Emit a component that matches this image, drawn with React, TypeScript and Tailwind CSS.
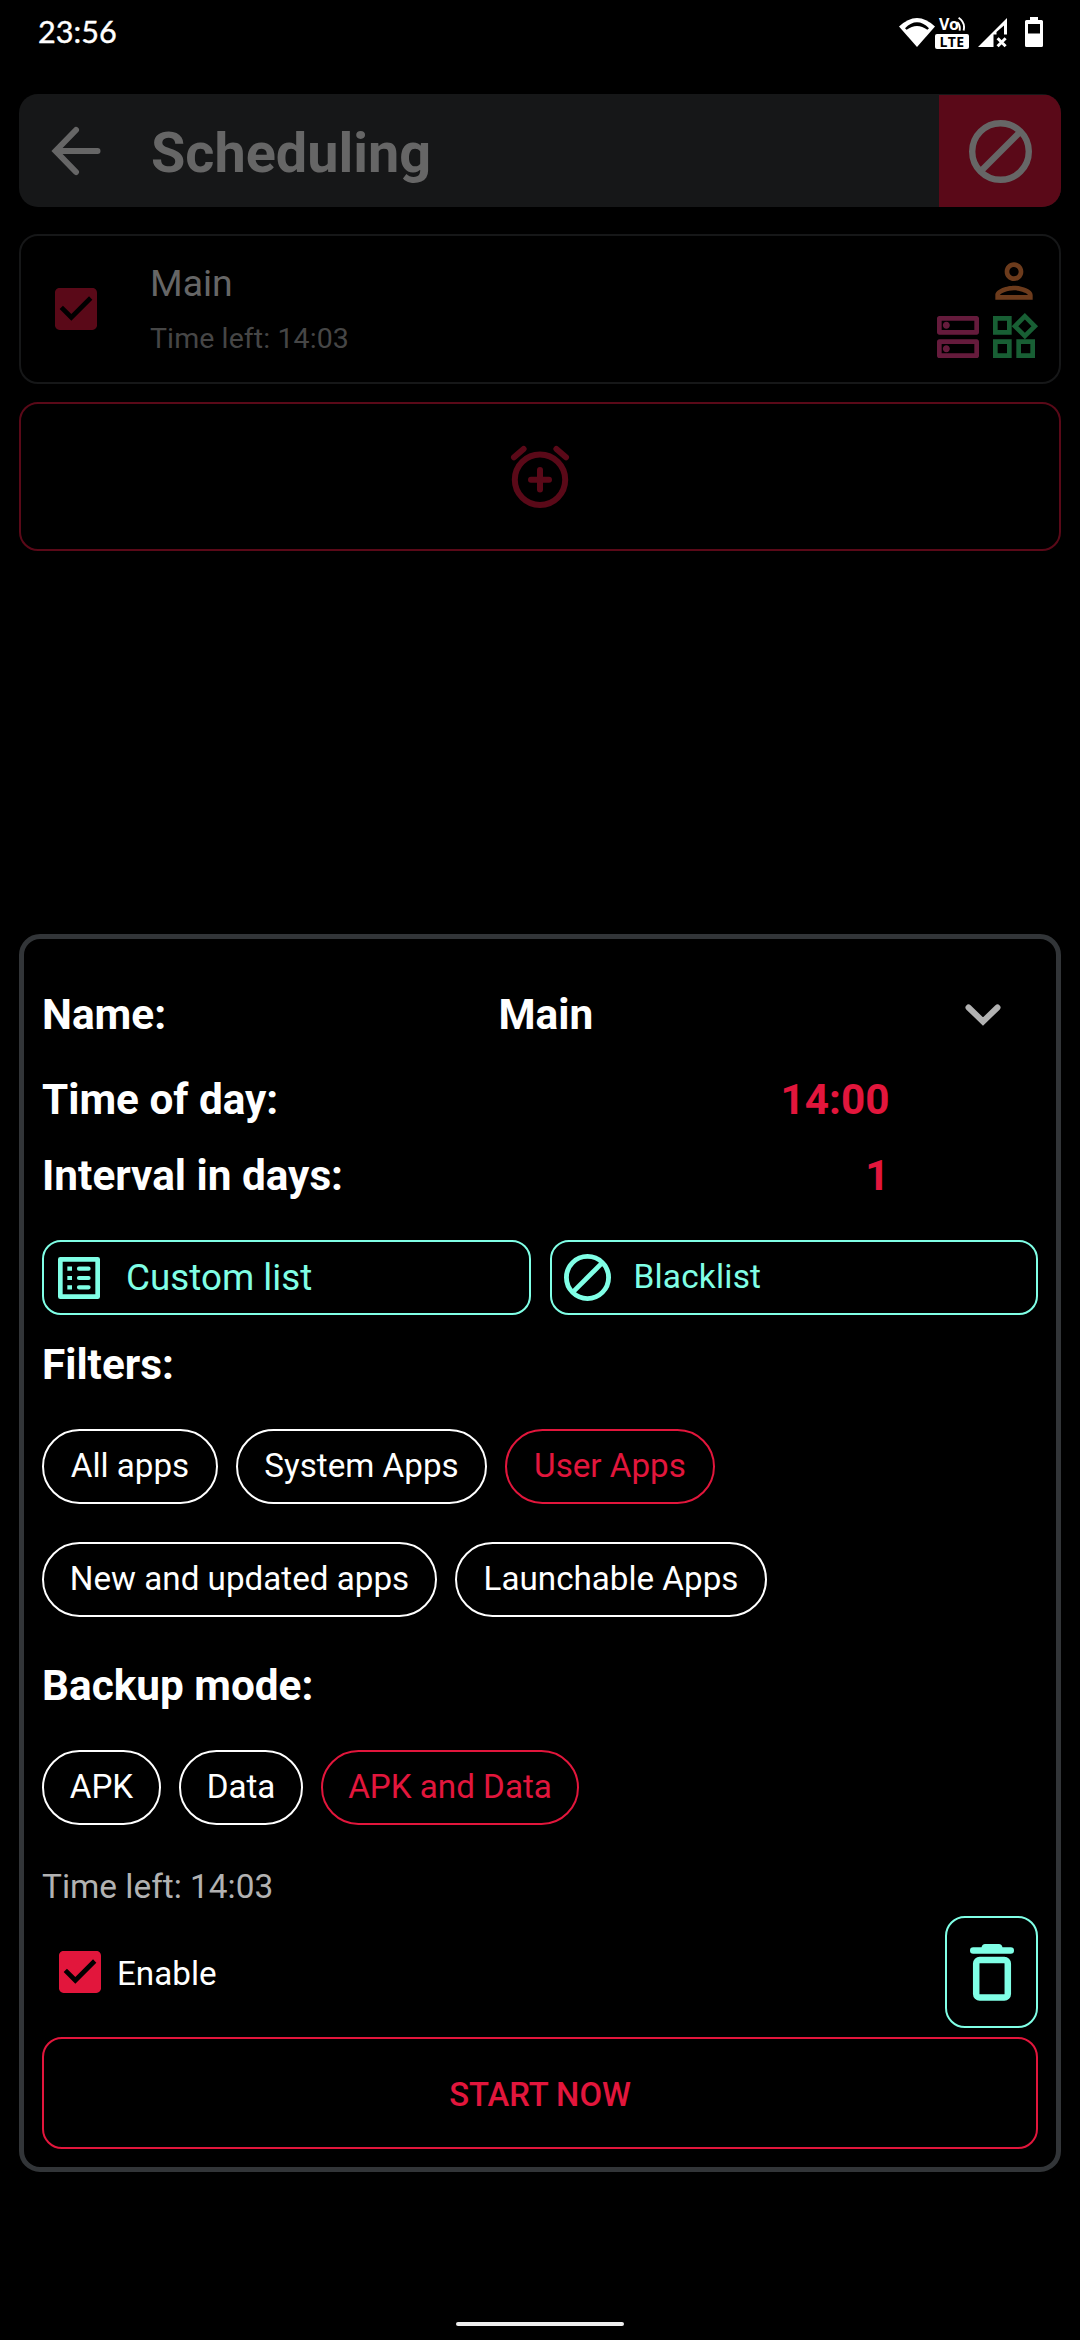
import type { ReactNode } from "react";

const CHECK_BOX =
  "M19 3H5c-1.11 0-2 .9-2 2v14c0 1.1.89 2 2 2h14c1.11 0 2-.9 2-2V5c0-1.1-.89-2-2-2zm-9 14l-5-5 1.41-1.41L10 14.17l7.59-7.59L19 8l-9 9z";
const PERSON =
  "M12 6c1.1 0 2 .9 2 2s-.9 2-2 2-2-.9-2-2 .9-2 2-2m0-2C9.79 4 8 5.79 8 8s1.79 4 4 4 4-1.79 4-4-1.79-4-4-4zm0 10c-2.67 0-8 1.34-8 4v2h16v-2c0-2.66-5.33-4-8-4zm-6 4c.22-.72 3.31-2 6-2 2.7 0 5.8 1.29 6 2H6z";
const DNS =
  "M19 15v4H5v-4h14m1-2H4c-.55 0-1 .45-1 1v6c0 .55.45 1 1 1h16c.55 0 1-.45 1-1v-6c0-.55-.45-1-1-1zM7 18.5c-.82 0-1.5-.67-1.5-1.5s.68-1.5 1.5-1.5 1.5.67 1.5 1.5-.67 1.5-1.5 1.5zM19 5v4H5V5h14m1-2H4c-.55 0-1 .45-1 1v6c0 .55.45 1 1 1h16c.55 0 1-.45 1-1V4c0-.55-.45-1-1-1zM7 8.5c-.82 0-1.5-.67-1.5-1.5S6.18 5.5 7 5.5s1.5.68 1.5 1.5S7.83 8.5 7 8.5z";
const WIDGETS =
  "M16.66 4.52l2.83 2.83-2.83 2.83-2.83-2.83 2.83-2.83M9 5v4H5V5h4m10 10v4h-4v-4h4M9 15v4H5v-4h4m7.66-13.31L11 7.34 16.66 13l5.66-5.66-5.66-5.65zM11 3H3v8h8V3zm10 10h-8v8h8v-8zm-10 0H3v8h8v-8z";

function MaterialIcon({ d, className }: { d: string; className: string }) {
  return (
    <svg viewBox="0 0 24 24" fill="currentColor" className={`size-14 shrink-0 ${className}`}>
      <path d={d} />
    </svg>
  );
}

function BlockIcon({ className, stroke }: { className: string; stroke: number }) {
  const r = 32 - stroke / 2;
  const k = r * Math.SQRT1_2;
  return (
    <svg viewBox="0 0 64 64" fill="none" stroke="currentColor" strokeWidth={stroke} className={`shrink-0 ${className}`}>
      <circle cx="32" cy="32" r={r} />
      <path d={`M${32 - k} ${32 + k}L${32 + k} ${32 - k}`} />
    </svg>
  );
}

function VolteBadge() {
  return (
    <div className="flex h-[34px] w-[34px] flex-col font-['Open_Sans',sans-serif] font-bold">
      <div className="flex h-[17px] items-start pl-[4px]">
        <span className="text-[16px] leading-[17px] tracking-[-0.5px]">Vo</span>
        <svg viewBox="0 0 9 17" className="-ml-[2px] h-[17px] w-[9px]" fill="none" stroke="white" strokeWidth="1.9">
          <path d="M1.200 6.200Q4.600 9 3.600 14.600M2.600 1.800Q9.600 6.500 7.600 14.600" />
        </svg>
      </div>
      <div className="mt-[0.500px] flex h-[15.500px] items-center justify-center rounded-[2px] bg-white text-[14px] leading-[15px] tracking-[0.3px] text-black">
        LTE
      </div>
    </div>
  );
}

function StatusBar() {
  return (
    <header className="flex h-[94px] items-start justify-between pl-[38px] pr-[37px]">
      <div className="pt-[12px] font-[Lato,sans-serif] text-[30.6px] leading-[40px] text-white [-webkit-text-stroke:0.4px_white]">
        23:56
      </div>
      <div className="flex pt-[16px] text-white">
        <svg viewBox="0 0 36 34" className="h-[34px] w-[36px]" fill="white">
          <path d="M0 10.6Q18-6.6 36 10.6L18 31z" />
          <path d="M6 12.3Q18 .4 30 12.3L28.4 13.8Q18 6.2 7.6 13.8z" fill="black" />
        </svg>
        <VolteBadge />
        <svg viewBox="0 0 30 34" className="ml-[9px] h-[34px] w-[30px]" fill="white">
          <path d="M0 31L29 2v16.5h-3V9.5l-7.5 6.5v2.5h-3V31z" />
          <path d="M19.6 22.2l8 8M27.6 22.2l-8 8" stroke="white" strokeWidth="3" />
        </svg>
        <svg viewBox="0 0 18 34" className="ml-[17px] h-[34px] w-[18px]" fill="white">
          <path fillRule="evenodd" d="M5 1h8v3h3.5q1.5 0 1.5 1.5v24q0 1.500-1.500 1.500h-15Q0 31 0 29.500v-24Q0 4 1.500 4H5zM3 8v9.600h12V8z" />
        </svg>
      </div>
    </header>
  );
}

function Chip({ children, width, active = false }: { children: ReactNode; width: string; active?: boolean }) {
  return (
    <button
      className={`flex h-[75px] items-center justify-center whitespace-nowrap rounded-full border-2 pb-[2px] text-[33.200px] leading-none ${width} ${
        active ? "border-[#e2163c] text-[#e2163c]" : "border-white text-white"
      }`}
    >
      {children}
    </button>
  );
}

function ScheduleList() {
  return (
    <main className="flex flex-col px-[19px]">
      <div className="flex h-[113px] overflow-hidden rounded-[19px] bg-[#161718]">
        <div className="flex flex-1 items-center pl-[32px]">
          <svg viewBox="0 0 50 50" className="size-[50px]" fill="none" stroke="#666666" strokeWidth="6" strokeLinecap="round">
            <path d="M25 4L4.600 25 25 46M5 25h41.500" />
          </svg>
          <h1 className="ml-[50px] pt-[6px] text-[55.8px] font-bold leading-none text-[#666666]">Scheduling</h1>
        </div>
        <div className="mt-px flex w-[122px] items-center justify-center bg-[#5a0918]">
          <BlockIcon className="size-[63px] text-[#666666]" stroke={6.5} />
        </div>
      </div>

      <div className="mt-[27px] flex h-[150px] rounded-[19px] border-2 border-[#161718]">
        <div className="flex items-center pl-[26.500px]">
          <MaterialIcon d={CHECK_BOX} className="text-[#5a0918]" />
        </div>
        <div className="ml-[46.500px] flex flex-1 flex-col pt-[22px]">
          <div className="text-[37.400px] leading-[50px] text-[#666666]">Main</div>
          <div className="mt-[8px] text-[28.500px] leading-[46px] tracking-[0.1px] text-[#464646]">Time left: 14:03</div>
        </div>
        <div className="flex flex-col items-end pr-[17px] pt-[17px]">
          <MaterialIcon d={PERSON} className="text-[#6c3b1c]" />
          <div className="flex">
            <MaterialIcon d={DNS} className="text-[#651b3c]" />
            <MaterialIcon d={WIDGETS} className="text-[#185f34]" />
          </div>
        </div>
      </div>

      <div className="mt-[18px] flex h-[149px] items-center justify-center rounded-[19px] border-2 border-[#5a0918]">
        <svg viewBox="510 445 60 64" className="h-[64px] w-[60px]" fill="none" stroke="#5a0918" strokeWidth="6" strokeLinecap="round">
          <circle cx="540" cy="479.700" r="25.200" />
          <path d="M531 479.700h18M540 470v19.400M514 457.300l9.600-8.300M566 457.300l-9.600-8.300" />
        </svg>
      </div>
    </main>
  );
}

function ScheduleSheet() {
  return (
    <section className="mx-[19px] mt-[383px] flex h-[1238px] flex-col rounded-[21px] border-[5px] border-[#323538] px-[18px] pt-[33px] text-white">
      <div className="flex h-[85px] items-center text-[42.400px] font-bold leading-none">
        <div className="w-[456.500px] pt-[2px]">Name:</div>
        <div className="flex-1 pt-[2px]">Main</div>
        <svg viewBox="0 0 36 22" className="mr-[37.500px] h-[22px] w-[36px]" fill="none" stroke="#b2b2b2" strokeWidth="6" strokeLinecap="round">
          <path d="M3.500 3.500L18 17.500 32.500 3.500" />
        </svg>
      </div>
      <div className="flex h-[85px] w-[847.500px] items-center justify-between pt-[2px] text-[42.300px] font-bold leading-none">
        <div>Time of day:</div>
        <div className="text-[#e2163c]">14:00</div>
      </div>
      <div className="flex h-[67px] w-[847.500px] items-center justify-between pt-[2px] text-[42.300px] font-bold leading-none">
        <div>Interval in days:</div>
        <div className="text-[#e2163c]">1</div>
      </div>

      <div className="mt-[31px] flex justify-between text-[#80ffe6]">
        <button className="flex h-[75px] w-[489px] items-center rounded-[19px] border-2 border-[#80ffe6] pl-[7px]">
          <svg viewBox="0 0 24 24" fill="currentColor" className="size-14">
            <path fillRule="evenodd" d="M4 3h16q1 0 1 1v16q0 1-1 1H4q-1 0-1-1V4q0-1 1-1zM5 5v14h14V5z" />
            <path d="M7 7.100h2v1.800H7zM7 11.100h2v1.800H7zM7 15.100h2v1.800H7z" />
            <path d="M12 8h4.100M12 12h4.100M12 16h4.100" stroke="currentColor" strokeWidth="1.800" strokeLinecap="round" />
          </svg>
          <span className="ml-[19px] pt-[2px] text-[36.800px] leading-none">Custom list</span>
        </button>
        <button className="flex h-[75px] w-[488px] items-center rounded-[19px] border-2 border-[#80ffe6] pl-[11.500px]">
          <BlockIcon className="size-[47px]" stroke={6.6} />
          <span className="ml-[23px] pb-px text-[33.400px] leading-none tracking-[0.2px]">Blacklist</span>
        </button>
      </div>

      <h2 className="flex h-[100px] items-center text-[42.300px] font-bold leading-none">Filters:</h2>
      <div className="mt-[14px] flex gap-[18px]">
        <Chip width="w-[176px]">All apps</Chip>
        <Chip width="w-[251px]">System Apps</Chip>
        <Chip width="w-[210px]" active>User Apps</Chip>
      </div>
      <div className="mt-[38px] flex gap-[18px]">
        <Chip width="w-[395px]">New and updated apps</Chip>
        <Chip width="w-[312px]">Launchable Apps</Chip>
      </div>

      <h2 className="flex h-[133px] items-center pt-[5px] text-[42.300px] font-bold leading-none">Backup mode:</h2>
      <div className="flex gap-[18px]">
        <Chip width="w-[119px]">APK</Chip>
        <Chip width="w-[124px]">Data</Chip>
        <Chip width="w-[258px]" active>APK and Data</Chip>
      </div>

      <div className="flex h-[91px] items-center pt-[33px] text-[33.400px] leading-none text-[#b2b2b2]">Time left: 14:03</div>

      <div className="flex h-[112px] items-center">
        <MaterialIcon d={CHECK_BOX} className="ml-[9.500px] text-[#e2163c]" />
        <span className="ml-[9.500px] flex-1 pt-[3px] text-[33.200px] leading-none">Enable</span>
        <button className="flex h-[112px] w-[93px] items-center justify-center rounded-[20px] border-2 border-[#80ffe6]">
          <svg viewBox="0 0 44 57" className="h-[57px] w-[44px]" fill="#80ffe6">
            <path d="M3.200 3.300H11.500Q12.500 0 15 0H29Q31.500 0 32.500 3.300H40.800Q44 3.300 44 6.500T40.800 9.700H3.200Q0 9.700 0 6.500T3.200 3.300z" />
            <rect x="6.200" y="16" width="31.600" height="37.500" rx="3.500" fill="none" stroke="#80ffe6" strokeWidth="6.500" />
          </svg>
        </button>
      </div>

      <button className="mt-[9px] flex h-[112px] items-center justify-center rounded-[20px] border-2 border-[#e2163c] pt-[5px] text-[32.800px] font-medium leading-none text-[#e2163c]">
        START NOW
      </button>
    </section>
  );
}

export default function App() {
  return (
    <div className="flex h-[2340px] w-[1080px] flex-col overflow-hidden bg-black font-[Roboto,sans-serif]">
      <StatusBar />
      <ScheduleList />
      <ScheduleSheet />
      <div className="mx-auto mt-[150px] h-[4px] w-[168px] rounded-full bg-[#eeeeee]" />
    </div>
  );
}
